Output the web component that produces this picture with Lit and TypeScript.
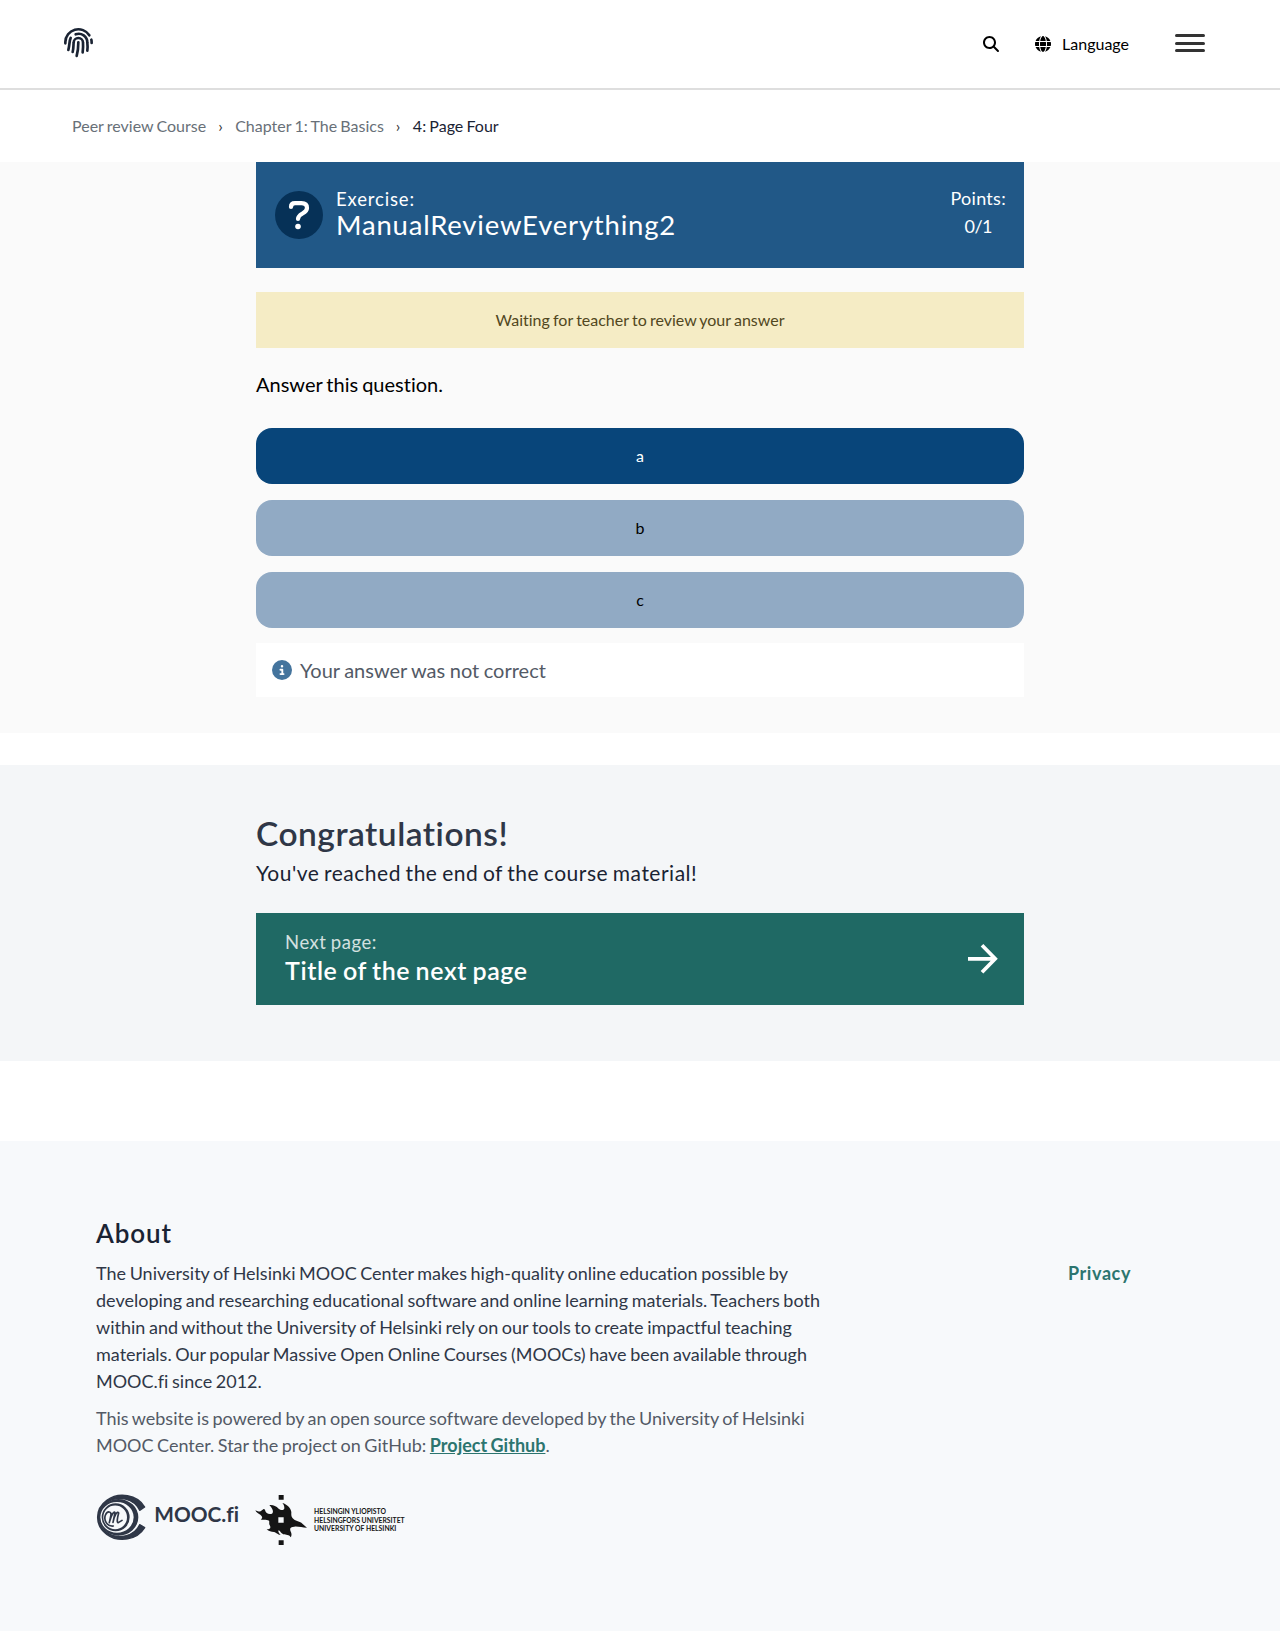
import { LitElement, html, css, svg } from "lit";
import { customElement } from "lit/decorators.js";

const searchIcon = svg`<path d="M416 208c0 45.9-14.9 88.3-40 122.7L502.6 457.4c12.5 12.5 12.5 32.8 0 45.3s-32.8 12.5-45.3 0L330.7 376c-34.4 25.2-76.8 40-122.7 40C93.1 416 0 322.9 0 208S93.1 0 208 0S416 93.1 416 208zM208 352a144 144 0 1 0 0-288 144 144 0 1 0 0 288z"/>`;
const globeIcon = svg`<path d="M352 256c0 22.2-1.2 43.6-3.3 64H163.3c-2.2-20.4-3.3-41.8-3.3-64s1.2-43.6 3.3-64H348.7c2.2 20.4 3.3 41.8 3.3 64zm28.8-64H503.9c5.3 20.5 8.1 41.9 8.1 64s-2.8 43.5-8.1 64H380.8c2.1-20.6 3.2-42 3.2-64s-1.1-43.4-3.2-64zm112.6-32H376.7c-10-63.9-29.8-117.4-55.3-151.6c78.3 20.7 142 77.5 171.9 151.6zm-149.1 0H167.7c6.1-36.4 15.5-68.6 27-94.7c10.5-23.6 22.2-40.7 33.5-51.5C239.4 3.2 248.7 0 256 0s16.6 3.2 27.8 13.8c11.3 10.8 23 27.9 33.5 51.5c11.6 26 20.9 58.2 27 94.7zm-209 0H18.6C48.6 85.9 112.2 29.1 190.6 8.4C165.1 42.6 145.3 96.1 135.3 160zM8.1 192H131.2c-2.1 20.6-3.2 42-3.2 64s1.1 43.4 3.2 64H8.1C2.8 299.5 0 278.1 0 256s2.8-43.5 8.1-64zM194.7 446.6c-11.6-26-20.9-58.2-27-94.6H344.3c-6.1 36.4-15.5 68.6-27 94.6c-10.5 23.6-22.2 40.7-33.5 51.5C272.6 508.8 263.3 512 256 512s-16.6-3.2-27.8-13.8c-11.3-10.8-23-27.9-33.5-51.5zM135.3 352c10 63.9 29.8 117.4 55.3 151.6C112.2 482.9 48.6 426.1 18.6 352H135.3zm358.1 0c-30 74.1-93.6 130.9-171.9 151.6c25.5-34.2 45.2-87.7 55.3-151.6H493.4z"/>`;
const infoIcon = svg`<path d="M256 512A256 256 0 1 0 256 0a256 256 0 1 0 0 512zM216 336h24V272H216c-13.3 0-24-10.7-24-24s10.7-24 24-24h48c13.3 0 24 10.7 24 24v88h8c13.3 0 24 10.7 24 24s-10.7 24-24 24H216c-13.3 0-24-10.7-24-24s10.7-24 24-24zm40-208a32 32 0 1 1 0 64 32 32 0 1 1 0-64z"/>`;

const moocLogo = html`<svg width="144" height="50" viewBox="48 45 432 150" fill="#2f3747">
  <path d="M194 81A75 66 0 1 0 194 143L179 134A64 57 0 1 1 179 91Z" stroke="#2f3747" stroke-width="4" stroke-linejoin="round"/>
  <path fill-rule="evenodd" d="M56 112a59.500 55 0 1 0 119 0a59.500 55 0 1 0-119 0zM61 112a50 46 0 1 1 100 0a50 46 0 1 1-100 0z"/>
  <path fill-rule="evenodd" d="M65 112a42 42 0 1 0 84 0a42 42 0 1 0-84 0zM70 112a35.500 35.500 0 1 1 71 0a35.500 35.500 0 1 1-71 0z"/>
  <path d="M100 138C80 140 71 120 76 106C81 92 97 92 92 109L88 128M89 124C94 104 102 92 105 98L99 127C104 104 112 92 116 99C113 110 109 129 115 128L126 121" fill="none" stroke="#2f3747" stroke-width="5" stroke-linecap="round" stroke-linejoin="round"/>
  <text class="mooc" x="223" y="125" textLength="254" lengthAdjust="spacingAndGlyphs">MOOC.fi</text>
</svg>`;

const helsinkiLogo = html`<svg width="160" height="50" viewBox="45 45 480 150" fill="#151515">
  <path d="M116 45h15v14h-15zM116 181h15v14h-15z"/>
  <path fill-rule="evenodd" d="M46 91C54 96 60 96 68 89C70 86 74 86 75 90C77 100 86 104 96 101C102 96 98 85 88 75C100 74 108 78 116 86C122 92 133 92 133 84C133 78 131 73 127 69C142 73 152 84 154 96C154 106 152 111 163 119C170 123 186 126 188 132L201 143C186 143 176 139 163 140C150 140 148 146 153 157C156 164 154 169 152 172C147 163 138 165 130 163C122 160 122 153 116 151C113 154 117 160 122 165C112 164 110 158 102 156C94 156 86 154 80 148C90 148 93 144 90 137C84 128 92 124 84 121C76 116 70 122 62 118C69 114 67 109 61 104C54 100 49 98 46 91ZM115 112V128H131V112Z"/>
  <text class="hy" x="222" y="102" textLength="216" lengthAdjust="spacingAndGlyphs">HELSINGIN YLIOPISTO</text>
  <text class="hy" x="222" y="128" textLength="272" lengthAdjust="spacingAndGlyphs">HELSINGFORS UNIVERSITET</text>
  <text class="hy" x="222" y="153" textLength="247" lengthAdjust="spacingAndGlyphs">UNIVERSITY OF HELSINKI</text>
</svg>`;

@customElement("app-root")
export class AppRoot extends LitElement {
  static styles = css`
    :host { display: block; height: 1631px; overflow: hidden; background: #fff; color: #000; font: 16px/24px Lato, sans-serif; font-variant-ligatures: none; }
    * { box-sizing: border-box; word-spacing: -.055em; }
    svg { display: block; flex: none; overflow: visible; }
    p, h1, h2, h3 { margin: 0; font-weight: 400; white-space: nowrap; }
    .top { height: 90px; border-bottom: 2px solid #dedede; display: flex; align-items: flex-start; padding: 28px 75px 0 64px; }
    .tools { margin-left: auto; display: flex; align-items: flex-start; padding-top: 4px; }
    .tools svg { margin-top: 4px; }
    .search { margin-right: 36px; }
    .lang { margin-left: 11px; }
    .menu { margin: 2px 0 0 46px; width: 30px; height: 18px; display: flex; flex-direction: column; justify-content: space-between; }
    .menu i { height: 3px; border-radius: 1.5px; background: #333; }
    .crumbs { height: 72px; padding: 24px 72px; display: flex; gap: 12px; color: #687078; }
    .crumbs b { font-weight: 400; color: #1a2333; }
    .sep { color: #333; width: 5px; }
    .exercise { background: #fafafa; height: 571px; padding: 0 256px; }
    .head { height: 106px; background: #215887; color: #fff; display: flex; padding: 24px 18px 0 19px; }
    .head svg { margin-top: 5px; margin-right: 13px; }
    .label { font-size: 18.5px; line-height: 27px; letter-spacing: .85px; }
    .name { font-size: 27.5px; line-height: 24px; letter-spacing: .8px; }
    .points { margin: -1px 0 0 auto; text-align: center; font-size: 18px; line-height: 27px; letter-spacing: .3px; }
    .score { letter-spacing: -.6px; padding-top: 1px; }
    .wait { margin-top: 24px; height: 56px; line-height: 56px; text-align: center; background: #f5ecc5; color: #514721; }
    .ask { font-size: 20px; line-height: 32px; margin: 20px 0 28px; }
    .opt { height: 56px; line-height: 56px; text-align: center; border-radius: 16px; background: #91aac4; margin-bottom: 16px; }
    .chosen { background: #08457a; color: #fff; }
    .result { margin-top: -1px; height: 54px; background: #fff; padding: 0 16px; display: flex; align-items: center; gap: 8px; font-size: 20px; color: #535a66; }
    .result span { word-spacing: -.03em; }
    .end { margin-top: 32px; height: 296px; background: #f4f6f8; padding: 47px 256px 0; }
    .congrats { font-size: 33.5px; line-height: 42px; font-weight: 600; color: #2f3747; letter-spacing: .5px; }
    .reached { font-size: 21px; line-height: 30px; margin-top: 4px; color: #1a2333; letter-spacing: .5px; }
    .next { margin-top: 25px; height: 92px; background: #1f6964; color: #fff; display: flex; align-items: center; justify-content: space-between; padding: 0 26px 0 29px; }
    .next div { padding-bottom: 4px; }
    .nl { font-size: 18.5px; line-height: 26px; opacity: .8; letter-spacing: .55px; }
    .nt { font-size: 25px; line-height: 30px; font-weight: 600; letter-spacing: .6px; }
    .foot { margin-top: 80px; height: 490px; background: #f7f9fb; padding: 74px 149px 0 96px; display: flex; justify-content: space-between; }
    .about { width: 740px; }
    .about h2 { font-size: 26px; line-height: 36px; font-weight: 600; color: #1a2333; letter-spacing: .9px; }
    .about p { font-size: 18px; line-height: 27px; color: #2f3747; margin-top: 9px; }
    .about .power { color: #535a66; margin-top: 10px; word-spacing: -.062em; }
    .about a { color: #2c756f; font-weight: 700; text-decoration: underline; }
    .privacy { font-size: 18px; font-weight: 700; color: #2c756f; margin-top: 45px; line-height: 27px; letter-spacing: .6px; }
    .logos { display: flex; margin-top: 36px; gap: 15px; }
    .mooc { font-size: 63px; font-weight: 700; }
    .hy { font-size: 22px; font-weight: 700; word-spacing: 0; }
  `;

  render() {
    return html`
      <header class="top">
        <svg width="29" height="29.3" viewBox="0 0 87 88" fill="none" stroke="#1a2333" stroke-width="8" stroke-linecap="round">
          <path d="M4 46V42A39 39 0 0 1 76 22M82 35C83 38 83 42 83 45M20 30C16 37 17 50 13 66M35 19A26 26 0 0 1 70 44C71 52 71 60 70 68M26 72C29 60 28 50 29 44A14 14 0 0 1 57 44C58 55 57 64 56 73M43 43C43 60 42 70 38 84"/>
        </svg>
        <div class="tools">
          <svg class="search" width="16" height="16" viewBox="0 0 512 512">${searchIcon}</svg>
          <svg width="16" height="16" viewBox="0 0 512 512">${globeIcon}</svg>
          <span class="lang">Language</span>
          <div class="menu"><i></i><i></i><i></i></div>
        </div>
      </header>
      <nav class="crumbs"><span>Peer review Course</span><span class="sep">›</span><span>Chapter 1: The Basics</span><span class="sep">›</span><b>4: Page Four</b></nav>
      <section class="exercise">
        <div class="head">
          <svg width="48" height="48" viewBox="0 0 48 48"><circle cx="24" cy="24" r="24" fill="#063157"/>
            <path d="M16 16C16 13 18 12.200 20 12.200H26.500C30 12.200 32 14 32 17C32 23 23 22 23 28" fill="none" stroke="#fff" stroke-width="4.200" stroke-linecap="round"/><circle cx="23" cy="35.500" r="2.800" fill="#fff"/></svg>
          <div><h3 class="label">Exercise:</h3><h2 class="name">ManualReviewEverything2</h2></div>
          <div class="points"><div>Points:</div><div class="score">0/1</div></div>
        </div>
        <div class="wait">Waiting for teacher to review your answer</div>
        <p class="ask">Answer this question.</p>
        <div class="opt chosen">a</div><div class="opt">b</div><div class="opt">c</div>
        <div class="result"><svg width="20" height="20" viewBox="0 0 512 512" fill="#44749d">${infoIcon}</svg><span>Your answer was not correct</span></div>
      </section>
      <section class="end">
        <h1 class="congrats">Congratulations!</h1>
        <p class="reached">You've reached the end of the course material!</p>
        <div class="next"><div><p class="nl">Next page:</p><p class="nt">Title of the next page</p></div>
          <svg width="30" height="30" viewBox="0 0 30 30" fill="none" stroke="#fff" stroke-width="3.700"><path d="M0 14.800H27M14 1.300L27.200 14.800L14 28.300"/></svg></div>
      </section>
      <footer class="foot">
        <div class="about">
          <h2>About</h2>
          <p>The University of Helsinki MOOC Center makes high-quality online education possible by<br>developing and researching educational software and online learning materials. Teachers both<br>within and without the University of Helsinki rely on our tools to create impactful teaching<br>materials. Our popular Massive Open Online Courses (MOOCs) have been available through<br>MOOC.fi since 2012.</p>
          <p class="power">This website is powered by an open source software developed by the University of Helsinki<br>MOOC Center. Star the project on GitHub: <a>Project Github</a>.</p>
          <div class="logos">${moocLogo}${helsinkiLogo}</div>
        </div>
        <div class="privacy">Privacy</div>
      </footer>`;
  }
}
